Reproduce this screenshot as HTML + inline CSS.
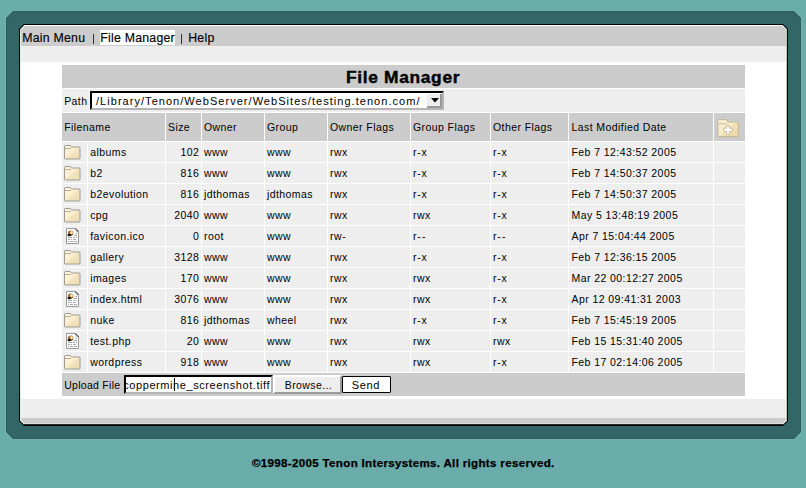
<!DOCTYPE html>
<html><head><meta charset="utf-8"><title>File Manager</title>
<style>
html,body{margin:0;padding:0;}
body{width:806px;height:488px;background:#6aacaa;position:relative;overflow:hidden;font-family:"Liberation Sans", sans-serif;}
.b{position:absolute;}
.t{position:absolute;white-space:pre;color:#000;}
</style></head><body>
<svg width="0" height="0" style="position:absolute"><defs>
<linearGradient id="fgrad" x1="0" y1="0" x2="1" y2="1"><stop offset="0" stop-color="#fdf5de"/><stop offset="0.5" stop-color="#faedcc"/><stop offset="0.53" stop-color="#f3e4bd"/><stop offset="1" stop-color="#ebdbb0"/></linearGradient>
<linearGradient id="fpgrad" x1="0" y1="0" x2="1" y2="1"><stop offset="0" stop-color="#fcf2d6"/><stop offset="0.5" stop-color="#f8eac4"/><stop offset="0.52" stop-color="#f2e2b8"/><stop offset="1" stop-color="#e8d5a5"/></linearGradient>
</defs></svg>
<div class="b" style="left:5px;top:10px;width:797px;height:430px;background:#70b3b0;clip-path:polygon(7.4px 0,calc(100% - 7.4px) 0,100% 7.4px,100% calc(100% - 7.4px),calc(100% - 7.4px) 100%,7.4px 100%,0 calc(100% - 7.4px),0 7.4px)"></div>
<div class="b" style="left:6px;top:11px;width:795px;height:428px;background:#2e5d5c;clip-path:polygon(7px 0,calc(100% - 7px) 0,100% 7px,100% calc(100% - 7px),calc(100% - 7px) 100%,7px 100%,0 calc(100% - 7px),0 7px)"></div>
<div class="b" style="left:7px;top:12px;width:793px;height:426px;background:#336666;clip-path:polygon(6.6px 0,calc(100% - 6.6px) 0,100% 6.6px,100% calc(100% - 6.6px),calc(100% - 6.6px) 100%,6.6px 100%,0 calc(100% - 6.6px),0 6.6px)"></div>
<div class="b" style="left:19px;top:24px;width:769px;height:402px;background:#000;clip-path:polygon(5px 0,calc(100% - 5px) 0,100% 5px,100% calc(100% - 5px),calc(100% - 5px) 100%,5px 100%,0 calc(100% - 5px),0 5px)"></div>
<div class="b" style="left:20px;top:25px;width:767px;height:400px;background:#fff;clip-path:polygon(4.4px 0,calc(100% - 4.4px) 0,100% 4.4px,100% calc(100% - 4.4px),calc(100% - 4.4px) 100%,4.4px 100%,0 calc(100% - 4.4px),0 4.4px)"></div>
<div class="b" style="left:21px;top:26px;width:765px;height:20px;background:#cccccc;clip-path:polygon(3.8px 0,calc(100% - 3.8px) 0,100% 3.8px,100% 100%,0 100%,0 3.8px)"></div>
<div class="b" style="left:21px;top:46px;width:765px;height:16px;background:#eeeeee;"></div>
<div class="b" style="left:21px;top:399px;width:765px;height:19px;background:#eeeeee;"></div>
<div class="b" style="left:21px;top:418px;width:765px;height:6px;background:#cccccc;clip-path:polygon(0 0,100% 0,100% calc(100% - 3.8px),calc(100% - 3.8px) 100%,3.8px 100%,0 calc(100% - 3.8px))"></div>
<div class="b" style="left:23px;top:423px;width:761px;height:1px;background:#dcdcdc;"></div>
<div class="b" style="left:24px;top:424px;width:759px;height:1px;background:#2a2a2a;"></div>
<div class="b" style="left:20px;top:30px;width:1px;height:390px;background:#e4f0e4;"></div>
<div class="b" style="left:786px;top:30px;width:1px;height:390px;background:#b4ccb4;"></div>
<div class="b" style="left:100px;top:30px;width:75px;height:15px;background:#fff;"></div>
<div class="t" style="top:31.59px;font-size:12.3px;line-height:12.3px;letter-spacing:0.25px;left:22.20px;-webkit-text-stroke:0.15px #000;">Main Menu</div>
<div class="b" style="left:93px;top:34px;width:1px;height:10px;background:#333;"></div>
<div class="t" style="top:31.59px;font-size:12.3px;line-height:12.3px;letter-spacing:0.25px;left:100.20px;-webkit-text-stroke:0.15px #000;">File Manager</div>
<div class="b" style="left:181px;top:34px;width:1px;height:10px;background:#333;"></div>
<div class="t" style="top:31.59px;font-size:12.3px;line-height:12.3px;letter-spacing:0.25px;left:188.20px;-webkit-text-stroke:0.15px #000;">Help</div>
<div class="b" style="left:62px;top:65px;width:683px;height:23px;background:#cccccc;"></div>
<div class="t" style="top:69.63px;font-size:15.8px;line-height:15.8px;letter-spacing:0.6px;font-weight:700;left:346.30px;transform:scaleX(1.1);transform-origin:0 0;-webkit-text-stroke:0.4px #000;">File Manager</div>
<div class="b" style="left:62px;top:89px;width:683px;height:23px;background:#eeeeee;"></div>
<div class="t" style="top:96.11px;font-size:10.5px;line-height:10.5px;letter-spacing:0.42px;left:64.20px;">Path</div>
<div class="b" style="left:89px;top:91px;width:1px;height:19px;background:#f8f8f8;"></div>
<div class="b" style="left:90px;top:91px;width:354px;height:19px;background:#fff;box-sizing:border-box;border-top:2px solid #000;border-left:2px solid #000;border-right:2px solid #b4b4b4;border-bottom:2px solid #b4b4b4"></div>
<div class="t" style="top:95.69px;font-size:11px;line-height:11px;letter-spacing:1.04px;left:96.00px;">/Library/Tenon/WebServer/WebSites/testing.tenon.com/</div>
<div class="b" style="left:427px;top:94px;width:15px;height:14px;background:#eeeeee;box-sizing:border-box;border-right:2px solid #9a9a9a;border-bottom:2px solid #9a9a9a"></div>
<svg width="9" height="5" viewBox="0 0 9 5" style="position:absolute;left:430.5px;top:98px"><path d="M0 0 H8 L4 4.5 Z" fill="#000"/></svg>
<div class="b" style="left:62px;top:113px;width:103px;height:28px;background:#cccccc;"></div>
<div class="b" style="left:166px;top:113px;width:35px;height:28px;background:#cccccc;"></div>
<div class="b" style="left:202px;top:113px;width:62px;height:28px;background:#cccccc;"></div>
<div class="b" style="left:265px;top:113px;width:62px;height:28px;background:#cccccc;"></div>
<div class="b" style="left:328px;top:113px;width:82px;height:28px;background:#cccccc;"></div>
<div class="b" style="left:411px;top:113px;width:79px;height:28px;background:#cccccc;"></div>
<div class="b" style="left:491px;top:113px;width:77px;height:28px;background:#cccccc;"></div>
<div class="b" style="left:569px;top:113px;width:144px;height:28px;background:#cccccc;"></div>
<div class="b" style="left:714px;top:113px;width:31px;height:28px;background:#cccccc;"></div>
<div class="t" style="top:122.11px;font-size:10.5px;line-height:10.5px;letter-spacing:0.42px;left:64.20px;">Filename</div>
<div class="t" style="top:122.11px;font-size:10.5px;line-height:10.5px;letter-spacing:0.42px;left:168.00px;">Size</div>
<div class="t" style="top:122.11px;font-size:10.5px;line-height:10.5px;letter-spacing:0.42px;left:204.00px;">Owner</div>
<div class="t" style="top:122.11px;font-size:10.5px;line-height:10.5px;letter-spacing:0.42px;left:267.00px;">Group</div>
<div class="t" style="top:122.11px;font-size:10.5px;line-height:10.5px;letter-spacing:0.42px;left:330.00px;">Owner Flags</div>
<div class="t" style="top:122.11px;font-size:10.5px;line-height:10.5px;letter-spacing:0.42px;left:413.00px;">Group Flags</div>
<div class="t" style="top:122.11px;font-size:10.5px;line-height:10.5px;letter-spacing:0.42px;left:493.00px;">Other Flags</div>
<div class="t" style="top:122.11px;font-size:10.5px;line-height:10.5px;letter-spacing:0.42px;left:571.50px;">Last Modified Date</div>
<svg width="22" height="19" viewBox="0 0 22 19" style="position:absolute;left:717px;top:118.5px">
<path d="M1 1.3 Q1 0.6 1.7 0.6 H9.3 L10.8 3 H20.6 Q21.3 3 21.3 3.7 V17 Q21.3 17.6 20.6 17.6 H1.7 Q1 17.6 1 17 Z" fill="url(#fpgrad)" stroke="#c4b898" stroke-width="1"/>
<path d="M1.5 4.8 H10" stroke="#c9bc98" stroke-width="1"/>
<path d="M9.5 6.7 H12.5 V9.2 H15.3 V12.4 H12.5 V15.3 H9.5 V12.4 H6.8 V9.2 H9.5 Z" fill="#fff" stroke="#cdbf9c" stroke-width="1"/>
</svg>
<div class="b" style="left:62px;top:142px;width:25px;height:20px;background:#eeeeee;"></div>
<div class="b" style="left:88px;top:142px;width:77px;height:20px;background:#eeeeee;"></div>
<div class="b" style="left:166px;top:142px;width:35px;height:20px;background:#eeeeee;"></div>
<div class="b" style="left:202px;top:142px;width:62px;height:20px;background:#eeeeee;"></div>
<div class="b" style="left:265px;top:142px;width:62px;height:20px;background:#eeeeee;"></div>
<div class="b" style="left:328px;top:142px;width:82px;height:20px;background:#eeeeee;"></div>
<div class="b" style="left:411px;top:142px;width:79px;height:20px;background:#eeeeee;"></div>
<div class="b" style="left:491px;top:142px;width:77px;height:20px;background:#eeeeee;"></div>
<div class="b" style="left:569px;top:142px;width:144px;height:20px;background:#eeeeee;"></div>
<div class="b" style="left:714px;top:142px;width:31px;height:20px;background:#eeeeee;"></div>
<svg width="17" height="15" viewBox="0 0 17 15" style="position:absolute;left:64px;top:144.5px">
<path d="M0.5 1.2 Q0.5 0.5 1.2 0.5 H6.3 L7.5 2 H15.3 Q16 2 16 2.7 V13.3 Q16 14 15.3 14 H1.2 Q0.5 14 0.5 13.3 Z" fill="url(#fgrad)" stroke="#9d9a93" stroke-width="1"/>
<path d="M1 3.5 H7" stroke="#b9b09a" stroke-width="1"/>
</svg>
<div class="t" style="top:146.81px;font-size:10.5px;line-height:10.5px;letter-spacing:0.42px;left:90.20px;">albums</div>
<div class="t" style="top:146.81px;font-size:10.5px;line-height:10.5px;letter-spacing:0.42px;right:606.70px;">102</div>
<div class="t" style="top:146.81px;font-size:10.5px;line-height:10.5px;letter-spacing:0.42px;left:204.00px;">www</div>
<div class="t" style="top:146.81px;font-size:10.5px;line-height:10.5px;letter-spacing:0.42px;left:267.00px;">www</div>
<div class="t" style="top:146.81px;font-size:10.5px;line-height:10.5px;letter-spacing:0.42px;left:330.00px;">rwx</div>
<div class="t" style="top:146.81px;font-size:10.5px;line-height:10.5px;letter-spacing:0.42px;left:413.00px;">r<span style="margin:0 0.35px">-</span>x</div>
<div class="t" style="top:146.81px;font-size:10.5px;line-height:10.5px;letter-spacing:0.42px;left:493.00px;">r<span style="margin:0 0.35px">-</span>x</div>
<div class="t" style="top:146.81px;font-size:10.5px;line-height:10.5px;letter-spacing:0.42px;left:571.50px;">Feb 7 12:43:52 2005</div>
<div class="b" style="left:62px;top:163px;width:25px;height:20px;background:#eeeeee;"></div>
<div class="b" style="left:88px;top:163px;width:77px;height:20px;background:#eeeeee;"></div>
<div class="b" style="left:166px;top:163px;width:35px;height:20px;background:#eeeeee;"></div>
<div class="b" style="left:202px;top:163px;width:62px;height:20px;background:#eeeeee;"></div>
<div class="b" style="left:265px;top:163px;width:62px;height:20px;background:#eeeeee;"></div>
<div class="b" style="left:328px;top:163px;width:82px;height:20px;background:#eeeeee;"></div>
<div class="b" style="left:411px;top:163px;width:79px;height:20px;background:#eeeeee;"></div>
<div class="b" style="left:491px;top:163px;width:77px;height:20px;background:#eeeeee;"></div>
<div class="b" style="left:569px;top:163px;width:144px;height:20px;background:#eeeeee;"></div>
<div class="b" style="left:714px;top:163px;width:31px;height:20px;background:#eeeeee;"></div>
<svg width="17" height="15" viewBox="0 0 17 15" style="position:absolute;left:64px;top:165.5px">
<path d="M0.5 1.2 Q0.5 0.5 1.2 0.5 H6.3 L7.5 2 H15.3 Q16 2 16 2.7 V13.3 Q16 14 15.3 14 H1.2 Q0.5 14 0.5 13.3 Z" fill="url(#fgrad)" stroke="#9d9a93" stroke-width="1"/>
<path d="M1 3.5 H7" stroke="#b9b09a" stroke-width="1"/>
</svg>
<div class="t" style="top:167.81px;font-size:10.5px;line-height:10.5px;letter-spacing:0.42px;left:90.20px;">b2</div>
<div class="t" style="top:167.81px;font-size:10.5px;line-height:10.5px;letter-spacing:0.42px;right:606.70px;">816</div>
<div class="t" style="top:167.81px;font-size:10.5px;line-height:10.5px;letter-spacing:0.42px;left:204.00px;">www</div>
<div class="t" style="top:167.81px;font-size:10.5px;line-height:10.5px;letter-spacing:0.42px;left:267.00px;">www</div>
<div class="t" style="top:167.81px;font-size:10.5px;line-height:10.5px;letter-spacing:0.42px;left:330.00px;">rwx</div>
<div class="t" style="top:167.81px;font-size:10.5px;line-height:10.5px;letter-spacing:0.42px;left:413.00px;">r<span style="margin:0 0.35px">-</span>x</div>
<div class="t" style="top:167.81px;font-size:10.5px;line-height:10.5px;letter-spacing:0.42px;left:493.00px;">r<span style="margin:0 0.35px">-</span>x</div>
<div class="t" style="top:167.81px;font-size:10.5px;line-height:10.5px;letter-spacing:0.42px;left:571.50px;">Feb 7 14:50:37 2005</div>
<div class="b" style="left:62px;top:184px;width:25px;height:20px;background:#eeeeee;"></div>
<div class="b" style="left:88px;top:184px;width:77px;height:20px;background:#eeeeee;"></div>
<div class="b" style="left:166px;top:184px;width:35px;height:20px;background:#eeeeee;"></div>
<div class="b" style="left:202px;top:184px;width:62px;height:20px;background:#eeeeee;"></div>
<div class="b" style="left:265px;top:184px;width:62px;height:20px;background:#eeeeee;"></div>
<div class="b" style="left:328px;top:184px;width:82px;height:20px;background:#eeeeee;"></div>
<div class="b" style="left:411px;top:184px;width:79px;height:20px;background:#eeeeee;"></div>
<div class="b" style="left:491px;top:184px;width:77px;height:20px;background:#eeeeee;"></div>
<div class="b" style="left:569px;top:184px;width:144px;height:20px;background:#eeeeee;"></div>
<div class="b" style="left:714px;top:184px;width:31px;height:20px;background:#eeeeee;"></div>
<svg width="17" height="15" viewBox="0 0 17 15" style="position:absolute;left:64px;top:186.5px">
<path d="M0.5 1.2 Q0.5 0.5 1.2 0.5 H6.3 L7.5 2 H15.3 Q16 2 16 2.7 V13.3 Q16 14 15.3 14 H1.2 Q0.5 14 0.5 13.3 Z" fill="url(#fgrad)" stroke="#9d9a93" stroke-width="1"/>
<path d="M1 3.5 H7" stroke="#b9b09a" stroke-width="1"/>
</svg>
<div class="t" style="top:188.81px;font-size:10.5px;line-height:10.5px;letter-spacing:0.42px;left:90.20px;">b2evolution</div>
<div class="t" style="top:188.81px;font-size:10.5px;line-height:10.5px;letter-spacing:0.42px;right:606.70px;">816</div>
<div class="t" style="top:188.81px;font-size:10.5px;line-height:10.5px;letter-spacing:0.42px;left:204.00px;">jdthomas</div>
<div class="t" style="top:188.81px;font-size:10.5px;line-height:10.5px;letter-spacing:0.42px;left:267.00px;">jdthomas</div>
<div class="t" style="top:188.81px;font-size:10.5px;line-height:10.5px;letter-spacing:0.42px;left:330.00px;">rwx</div>
<div class="t" style="top:188.81px;font-size:10.5px;line-height:10.5px;letter-spacing:0.42px;left:413.00px;">r<span style="margin:0 0.35px">-</span>x</div>
<div class="t" style="top:188.81px;font-size:10.5px;line-height:10.5px;letter-spacing:0.42px;left:493.00px;">r<span style="margin:0 0.35px">-</span>x</div>
<div class="t" style="top:188.81px;font-size:10.5px;line-height:10.5px;letter-spacing:0.42px;left:571.50px;">Feb 7 14:50:37 2005</div>
<div class="b" style="left:62px;top:205px;width:25px;height:20px;background:#eeeeee;"></div>
<div class="b" style="left:88px;top:205px;width:77px;height:20px;background:#eeeeee;"></div>
<div class="b" style="left:166px;top:205px;width:35px;height:20px;background:#eeeeee;"></div>
<div class="b" style="left:202px;top:205px;width:62px;height:20px;background:#eeeeee;"></div>
<div class="b" style="left:265px;top:205px;width:62px;height:20px;background:#eeeeee;"></div>
<div class="b" style="left:328px;top:205px;width:82px;height:20px;background:#eeeeee;"></div>
<div class="b" style="left:411px;top:205px;width:79px;height:20px;background:#eeeeee;"></div>
<div class="b" style="left:491px;top:205px;width:77px;height:20px;background:#eeeeee;"></div>
<div class="b" style="left:569px;top:205px;width:144px;height:20px;background:#eeeeee;"></div>
<div class="b" style="left:714px;top:205px;width:31px;height:20px;background:#eeeeee;"></div>
<svg width="17" height="15" viewBox="0 0 17 15" style="position:absolute;left:64px;top:207.5px">
<path d="M0.5 1.2 Q0.5 0.5 1.2 0.5 H6.3 L7.5 2 H15.3 Q16 2 16 2.7 V13.3 Q16 14 15.3 14 H1.2 Q0.5 14 0.5 13.3 Z" fill="url(#fgrad)" stroke="#9d9a93" stroke-width="1"/>
<path d="M1 3.5 H7" stroke="#b9b09a" stroke-width="1"/>
</svg>
<div class="t" style="top:209.81px;font-size:10.5px;line-height:10.5px;letter-spacing:0.42px;left:90.20px;">cpg</div>
<div class="t" style="top:209.81px;font-size:10.5px;line-height:10.5px;letter-spacing:0.42px;right:606.70px;">2040</div>
<div class="t" style="top:209.81px;font-size:10.5px;line-height:10.5px;letter-spacing:0.42px;left:204.00px;">www</div>
<div class="t" style="top:209.81px;font-size:10.5px;line-height:10.5px;letter-spacing:0.42px;left:267.00px;">www</div>
<div class="t" style="top:209.81px;font-size:10.5px;line-height:10.5px;letter-spacing:0.42px;left:330.00px;">rwx</div>
<div class="t" style="top:209.81px;font-size:10.5px;line-height:10.5px;letter-spacing:0.42px;left:413.00px;">rwx</div>
<div class="t" style="top:209.81px;font-size:10.5px;line-height:10.5px;letter-spacing:0.42px;left:493.00px;">r<span style="margin:0 0.35px">-</span>x</div>
<div class="t" style="top:209.81px;font-size:10.5px;line-height:10.5px;letter-spacing:0.42px;left:571.50px;">May 5 13:48:19 2005</div>
<div class="b" style="left:62px;top:226px;width:25px;height:20px;background:#eeeeee;"></div>
<div class="b" style="left:88px;top:226px;width:77px;height:20px;background:#eeeeee;"></div>
<div class="b" style="left:166px;top:226px;width:35px;height:20px;background:#eeeeee;"></div>
<div class="b" style="left:202px;top:226px;width:62px;height:20px;background:#eeeeee;"></div>
<div class="b" style="left:265px;top:226px;width:62px;height:20px;background:#eeeeee;"></div>
<div class="b" style="left:328px;top:226px;width:82px;height:20px;background:#eeeeee;"></div>
<div class="b" style="left:411px;top:226px;width:79px;height:20px;background:#eeeeee;"></div>
<div class="b" style="left:491px;top:226px;width:77px;height:20px;background:#eeeeee;"></div>
<div class="b" style="left:569px;top:226px;width:144px;height:20px;background:#eeeeee;"></div>
<div class="b" style="left:714px;top:226px;width:31px;height:20px;background:#eeeeee;"></div>
<svg width="14" height="17" viewBox="0 0 14 17" style="position:absolute;left:66px;top:228px">
<path d="M0.5 0.5 H9.2 L12.5 3.8 V15.5 H0.5 Z" fill="#fff" stroke="#9a9a9a" stroke-width="1"/>
<path d="M9.2 0.6 L12.5 3.9" stroke="#505050" stroke-width="1.3"/>
<path d="M10 2.5 V4 H11.5" stroke="#d0d0d0" stroke-width="0.8" fill="none"/>
<circle cx="4.6" cy="5.2" r="2.7" fill="#9a651f"/>
<circle cx="5.3" cy="4.7" r="1.6" fill="#e2b878"/>
<circle cx="5.6" cy="4.5" r="0.9" fill="#fbf6ee"/>
<ellipse cx="3.3" cy="7.2" rx="1.9" ry="1.1" fill="#0c0c0c"/>
<path d="M9.5 5.5 H11 M8 7.5 H11 M2 9.5 H6 M7 9.5 H9 M10 9.5 H11 M2 11.5 H4 M5 11.5 H6 M7 11.5 H10 M2 13.5 H3 M4 13.5 H7 M8 13.5 H11" stroke="#a8a8a8" stroke-width="1"/>
</svg>
<div class="t" style="top:230.81px;font-size:10.5px;line-height:10.5px;letter-spacing:0.42px;left:90.20px;">favicon.ico</div>
<div class="t" style="top:230.81px;font-size:10.5px;line-height:10.5px;letter-spacing:0.42px;right:606.70px;">0</div>
<div class="t" style="top:230.81px;font-size:10.5px;line-height:10.5px;letter-spacing:0.42px;left:204.00px;">root</div>
<div class="t" style="top:230.81px;font-size:10.5px;line-height:10.5px;letter-spacing:0.42px;left:267.00px;">www</div>
<div class="t" style="top:230.81px;font-size:10.5px;line-height:10.5px;letter-spacing:0.42px;left:330.00px;">rw<span style="margin:0 0.35px">-</span></div>
<div class="t" style="top:230.81px;font-size:10.5px;line-height:10.5px;letter-spacing:0.42px;left:413.00px;">r<span style="margin:0 0.35px">-</span><span style="margin:0 0.35px">-</span></div>
<div class="t" style="top:230.81px;font-size:10.5px;line-height:10.5px;letter-spacing:0.42px;left:493.00px;">r<span style="margin:0 0.35px">-</span><span style="margin:0 0.35px">-</span></div>
<div class="t" style="top:230.81px;font-size:10.5px;line-height:10.5px;letter-spacing:0.42px;left:571.50px;">Apr 7 15:04:44 2005</div>
<div class="b" style="left:62px;top:247px;width:25px;height:20px;background:#eeeeee;"></div>
<div class="b" style="left:88px;top:247px;width:77px;height:20px;background:#eeeeee;"></div>
<div class="b" style="left:166px;top:247px;width:35px;height:20px;background:#eeeeee;"></div>
<div class="b" style="left:202px;top:247px;width:62px;height:20px;background:#eeeeee;"></div>
<div class="b" style="left:265px;top:247px;width:62px;height:20px;background:#eeeeee;"></div>
<div class="b" style="left:328px;top:247px;width:82px;height:20px;background:#eeeeee;"></div>
<div class="b" style="left:411px;top:247px;width:79px;height:20px;background:#eeeeee;"></div>
<div class="b" style="left:491px;top:247px;width:77px;height:20px;background:#eeeeee;"></div>
<div class="b" style="left:569px;top:247px;width:144px;height:20px;background:#eeeeee;"></div>
<div class="b" style="left:714px;top:247px;width:31px;height:20px;background:#eeeeee;"></div>
<svg width="17" height="15" viewBox="0 0 17 15" style="position:absolute;left:64px;top:249.5px">
<path d="M0.5 1.2 Q0.5 0.5 1.2 0.5 H6.3 L7.5 2 H15.3 Q16 2 16 2.7 V13.3 Q16 14 15.3 14 H1.2 Q0.5 14 0.5 13.3 Z" fill="url(#fgrad)" stroke="#9d9a93" stroke-width="1"/>
<path d="M1 3.5 H7" stroke="#b9b09a" stroke-width="1"/>
</svg>
<div class="t" style="top:251.81px;font-size:10.5px;line-height:10.5px;letter-spacing:0.42px;left:90.20px;">gallery</div>
<div class="t" style="top:251.81px;font-size:10.5px;line-height:10.5px;letter-spacing:0.42px;right:606.70px;">3128</div>
<div class="t" style="top:251.81px;font-size:10.5px;line-height:10.5px;letter-spacing:0.42px;left:204.00px;">www</div>
<div class="t" style="top:251.81px;font-size:10.5px;line-height:10.5px;letter-spacing:0.42px;left:267.00px;">www</div>
<div class="t" style="top:251.81px;font-size:10.5px;line-height:10.5px;letter-spacing:0.42px;left:330.00px;">rwx</div>
<div class="t" style="top:251.81px;font-size:10.5px;line-height:10.5px;letter-spacing:0.42px;left:413.00px;">r<span style="margin:0 0.35px">-</span>x</div>
<div class="t" style="top:251.81px;font-size:10.5px;line-height:10.5px;letter-spacing:0.42px;left:493.00px;">r<span style="margin:0 0.35px">-</span>x</div>
<div class="t" style="top:251.81px;font-size:10.5px;line-height:10.5px;letter-spacing:0.42px;left:571.50px;">Feb 7 12:36:15 2005</div>
<div class="b" style="left:62px;top:268px;width:25px;height:20px;background:#eeeeee;"></div>
<div class="b" style="left:88px;top:268px;width:77px;height:20px;background:#eeeeee;"></div>
<div class="b" style="left:166px;top:268px;width:35px;height:20px;background:#eeeeee;"></div>
<div class="b" style="left:202px;top:268px;width:62px;height:20px;background:#eeeeee;"></div>
<div class="b" style="left:265px;top:268px;width:62px;height:20px;background:#eeeeee;"></div>
<div class="b" style="left:328px;top:268px;width:82px;height:20px;background:#eeeeee;"></div>
<div class="b" style="left:411px;top:268px;width:79px;height:20px;background:#eeeeee;"></div>
<div class="b" style="left:491px;top:268px;width:77px;height:20px;background:#eeeeee;"></div>
<div class="b" style="left:569px;top:268px;width:144px;height:20px;background:#eeeeee;"></div>
<div class="b" style="left:714px;top:268px;width:31px;height:20px;background:#eeeeee;"></div>
<svg width="17" height="15" viewBox="0 0 17 15" style="position:absolute;left:64px;top:270.5px">
<path d="M0.5 1.2 Q0.5 0.5 1.2 0.5 H6.3 L7.5 2 H15.3 Q16 2 16 2.7 V13.3 Q16 14 15.3 14 H1.2 Q0.5 14 0.5 13.3 Z" fill="url(#fgrad)" stroke="#9d9a93" stroke-width="1"/>
<path d="M1 3.5 H7" stroke="#b9b09a" stroke-width="1"/>
</svg>
<div class="t" style="top:272.81px;font-size:10.5px;line-height:10.5px;letter-spacing:0.42px;left:90.20px;">images</div>
<div class="t" style="top:272.81px;font-size:10.5px;line-height:10.5px;letter-spacing:0.42px;right:606.70px;">170</div>
<div class="t" style="top:272.81px;font-size:10.5px;line-height:10.5px;letter-spacing:0.42px;left:204.00px;">www</div>
<div class="t" style="top:272.81px;font-size:10.5px;line-height:10.5px;letter-spacing:0.42px;left:267.00px;">www</div>
<div class="t" style="top:272.81px;font-size:10.5px;line-height:10.5px;letter-spacing:0.42px;left:330.00px;">rwx</div>
<div class="t" style="top:272.81px;font-size:10.5px;line-height:10.5px;letter-spacing:0.42px;left:413.00px;">rwx</div>
<div class="t" style="top:272.81px;font-size:10.5px;line-height:10.5px;letter-spacing:0.42px;left:493.00px;">r<span style="margin:0 0.35px">-</span>x</div>
<div class="t" style="top:272.81px;font-size:10.5px;line-height:10.5px;letter-spacing:0.42px;left:571.50px;">Mar 22 00:12:27 2005</div>
<div class="b" style="left:62px;top:289px;width:25px;height:20px;background:#eeeeee;"></div>
<div class="b" style="left:88px;top:289px;width:77px;height:20px;background:#eeeeee;"></div>
<div class="b" style="left:166px;top:289px;width:35px;height:20px;background:#eeeeee;"></div>
<div class="b" style="left:202px;top:289px;width:62px;height:20px;background:#eeeeee;"></div>
<div class="b" style="left:265px;top:289px;width:62px;height:20px;background:#eeeeee;"></div>
<div class="b" style="left:328px;top:289px;width:82px;height:20px;background:#eeeeee;"></div>
<div class="b" style="left:411px;top:289px;width:79px;height:20px;background:#eeeeee;"></div>
<div class="b" style="left:491px;top:289px;width:77px;height:20px;background:#eeeeee;"></div>
<div class="b" style="left:569px;top:289px;width:144px;height:20px;background:#eeeeee;"></div>
<div class="b" style="left:714px;top:289px;width:31px;height:20px;background:#eeeeee;"></div>
<svg width="14" height="17" viewBox="0 0 14 17" style="position:absolute;left:66px;top:291px">
<path d="M0.5 0.5 H9.2 L12.5 3.8 V15.5 H0.5 Z" fill="#fff" stroke="#9a9a9a" stroke-width="1"/>
<path d="M9.2 0.6 L12.5 3.9" stroke="#505050" stroke-width="1.3"/>
<path d="M10 2.5 V4 H11.5" stroke="#d0d0d0" stroke-width="0.8" fill="none"/>
<circle cx="4.6" cy="5.2" r="2.7" fill="#9a651f"/>
<circle cx="5.3" cy="4.7" r="1.6" fill="#e2b878"/>
<circle cx="5.6" cy="4.5" r="0.9" fill="#fbf6ee"/>
<ellipse cx="3.3" cy="7.2" rx="1.9" ry="1.1" fill="#0c0c0c"/>
<path d="M9.5 5.5 H11 M8 7.5 H11 M2 9.5 H6 M7 9.5 H9 M10 9.5 H11 M2 11.5 H4 M5 11.5 H6 M7 11.5 H10 M2 13.5 H3 M4 13.5 H7 M8 13.5 H11" stroke="#a8a8a8" stroke-width="1"/>
</svg>
<div class="t" style="top:293.81px;font-size:10.5px;line-height:10.5px;letter-spacing:0.42px;left:90.20px;">index.html</div>
<div class="t" style="top:293.81px;font-size:10.5px;line-height:10.5px;letter-spacing:0.42px;right:606.70px;">3076</div>
<div class="t" style="top:293.81px;font-size:10.5px;line-height:10.5px;letter-spacing:0.42px;left:204.00px;">www</div>
<div class="t" style="top:293.81px;font-size:10.5px;line-height:10.5px;letter-spacing:0.42px;left:267.00px;">www</div>
<div class="t" style="top:293.81px;font-size:10.5px;line-height:10.5px;letter-spacing:0.42px;left:330.00px;">rwx</div>
<div class="t" style="top:293.81px;font-size:10.5px;line-height:10.5px;letter-spacing:0.42px;left:413.00px;">rwx</div>
<div class="t" style="top:293.81px;font-size:10.5px;line-height:10.5px;letter-spacing:0.42px;left:493.00px;">r<span style="margin:0 0.35px">-</span>x</div>
<div class="t" style="top:293.81px;font-size:10.5px;line-height:10.5px;letter-spacing:0.42px;left:571.50px;">Apr 12 09:41:31 2003</div>
<div class="b" style="left:62px;top:310px;width:25px;height:20px;background:#eeeeee;"></div>
<div class="b" style="left:88px;top:310px;width:77px;height:20px;background:#eeeeee;"></div>
<div class="b" style="left:166px;top:310px;width:35px;height:20px;background:#eeeeee;"></div>
<div class="b" style="left:202px;top:310px;width:62px;height:20px;background:#eeeeee;"></div>
<div class="b" style="left:265px;top:310px;width:62px;height:20px;background:#eeeeee;"></div>
<div class="b" style="left:328px;top:310px;width:82px;height:20px;background:#eeeeee;"></div>
<div class="b" style="left:411px;top:310px;width:79px;height:20px;background:#eeeeee;"></div>
<div class="b" style="left:491px;top:310px;width:77px;height:20px;background:#eeeeee;"></div>
<div class="b" style="left:569px;top:310px;width:144px;height:20px;background:#eeeeee;"></div>
<div class="b" style="left:714px;top:310px;width:31px;height:20px;background:#eeeeee;"></div>
<svg width="17" height="15" viewBox="0 0 17 15" style="position:absolute;left:64px;top:312.5px">
<path d="M0.5 1.2 Q0.5 0.5 1.2 0.5 H6.3 L7.5 2 H15.3 Q16 2 16 2.7 V13.3 Q16 14 15.3 14 H1.2 Q0.5 14 0.5 13.3 Z" fill="url(#fgrad)" stroke="#9d9a93" stroke-width="1"/>
<path d="M1 3.5 H7" stroke="#b9b09a" stroke-width="1"/>
</svg>
<div class="t" style="top:314.81px;font-size:10.5px;line-height:10.5px;letter-spacing:0.42px;left:90.20px;">nuke</div>
<div class="t" style="top:314.81px;font-size:10.5px;line-height:10.5px;letter-spacing:0.42px;right:606.70px;">816</div>
<div class="t" style="top:314.81px;font-size:10.5px;line-height:10.5px;letter-spacing:0.42px;left:204.00px;">jdthomas</div>
<div class="t" style="top:314.81px;font-size:10.5px;line-height:10.5px;letter-spacing:0.42px;left:267.00px;">wheel</div>
<div class="t" style="top:314.81px;font-size:10.5px;line-height:10.5px;letter-spacing:0.42px;left:330.00px;">rwx</div>
<div class="t" style="top:314.81px;font-size:10.5px;line-height:10.5px;letter-spacing:0.42px;left:413.00px;">r<span style="margin:0 0.35px">-</span>x</div>
<div class="t" style="top:314.81px;font-size:10.5px;line-height:10.5px;letter-spacing:0.42px;left:493.00px;">r<span style="margin:0 0.35px">-</span>x</div>
<div class="t" style="top:314.81px;font-size:10.5px;line-height:10.5px;letter-spacing:0.42px;left:571.50px;">Feb 7 15:45:19 2005</div>
<div class="b" style="left:62px;top:331px;width:25px;height:20px;background:#eeeeee;"></div>
<div class="b" style="left:88px;top:331px;width:77px;height:20px;background:#eeeeee;"></div>
<div class="b" style="left:166px;top:331px;width:35px;height:20px;background:#eeeeee;"></div>
<div class="b" style="left:202px;top:331px;width:62px;height:20px;background:#eeeeee;"></div>
<div class="b" style="left:265px;top:331px;width:62px;height:20px;background:#eeeeee;"></div>
<div class="b" style="left:328px;top:331px;width:82px;height:20px;background:#eeeeee;"></div>
<div class="b" style="left:411px;top:331px;width:79px;height:20px;background:#eeeeee;"></div>
<div class="b" style="left:491px;top:331px;width:77px;height:20px;background:#eeeeee;"></div>
<div class="b" style="left:569px;top:331px;width:144px;height:20px;background:#eeeeee;"></div>
<div class="b" style="left:714px;top:331px;width:31px;height:20px;background:#eeeeee;"></div>
<svg width="14" height="17" viewBox="0 0 14 17" style="position:absolute;left:66px;top:333px">
<path d="M0.5 0.5 H9.2 L12.5 3.8 V15.5 H0.5 Z" fill="#fff" stroke="#9a9a9a" stroke-width="1"/>
<path d="M9.2 0.6 L12.5 3.9" stroke="#505050" stroke-width="1.3"/>
<path d="M10 2.5 V4 H11.5" stroke="#d0d0d0" stroke-width="0.8" fill="none"/>
<circle cx="4.6" cy="5.2" r="2.7" fill="#9a651f"/>
<circle cx="5.3" cy="4.7" r="1.6" fill="#e2b878"/>
<circle cx="5.6" cy="4.5" r="0.9" fill="#fbf6ee"/>
<ellipse cx="3.3" cy="7.2" rx="1.9" ry="1.1" fill="#0c0c0c"/>
<path d="M9.5 5.5 H11 M8 7.5 H11 M2 9.5 H6 M7 9.5 H9 M10 9.5 H11 M2 11.5 H4 M5 11.5 H6 M7 11.5 H10 M2 13.5 H3 M4 13.5 H7 M8 13.5 H11" stroke="#a8a8a8" stroke-width="1"/>
</svg>
<div class="t" style="top:335.81px;font-size:10.5px;line-height:10.5px;letter-spacing:0.42px;left:90.20px;">test.php</div>
<div class="t" style="top:335.81px;font-size:10.5px;line-height:10.5px;letter-spacing:0.42px;right:606.70px;">20</div>
<div class="t" style="top:335.81px;font-size:10.5px;line-height:10.5px;letter-spacing:0.42px;left:204.00px;">www</div>
<div class="t" style="top:335.81px;font-size:10.5px;line-height:10.5px;letter-spacing:0.42px;left:267.00px;">www</div>
<div class="t" style="top:335.81px;font-size:10.5px;line-height:10.5px;letter-spacing:0.42px;left:330.00px;">rwx</div>
<div class="t" style="top:335.81px;font-size:10.5px;line-height:10.5px;letter-spacing:0.42px;left:413.00px;">rwx</div>
<div class="t" style="top:335.81px;font-size:10.5px;line-height:10.5px;letter-spacing:0.42px;left:493.00px;">rwx</div>
<div class="t" style="top:335.81px;font-size:10.5px;line-height:10.5px;letter-spacing:0.42px;left:571.50px;">Feb 15 15:31:40 2005</div>
<div class="b" style="left:62px;top:352px;width:25px;height:20px;background:#eeeeee;"></div>
<div class="b" style="left:88px;top:352px;width:77px;height:20px;background:#eeeeee;"></div>
<div class="b" style="left:166px;top:352px;width:35px;height:20px;background:#eeeeee;"></div>
<div class="b" style="left:202px;top:352px;width:62px;height:20px;background:#eeeeee;"></div>
<div class="b" style="left:265px;top:352px;width:62px;height:20px;background:#eeeeee;"></div>
<div class="b" style="left:328px;top:352px;width:82px;height:20px;background:#eeeeee;"></div>
<div class="b" style="left:411px;top:352px;width:79px;height:20px;background:#eeeeee;"></div>
<div class="b" style="left:491px;top:352px;width:77px;height:20px;background:#eeeeee;"></div>
<div class="b" style="left:569px;top:352px;width:144px;height:20px;background:#eeeeee;"></div>
<div class="b" style="left:714px;top:352px;width:31px;height:20px;background:#eeeeee;"></div>
<svg width="17" height="15" viewBox="0 0 17 15" style="position:absolute;left:64px;top:354.5px">
<path d="M0.5 1.2 Q0.5 0.5 1.2 0.5 H6.3 L7.5 2 H15.3 Q16 2 16 2.7 V13.3 Q16 14 15.3 14 H1.2 Q0.5 14 0.5 13.3 Z" fill="url(#fgrad)" stroke="#9d9a93" stroke-width="1"/>
<path d="M1 3.5 H7" stroke="#b9b09a" stroke-width="1"/>
</svg>
<div class="t" style="top:356.81px;font-size:10.5px;line-height:10.5px;letter-spacing:0.42px;left:90.20px;">wordpress</div>
<div class="t" style="top:356.81px;font-size:10.5px;line-height:10.5px;letter-spacing:0.42px;right:606.70px;">918</div>
<div class="t" style="top:356.81px;font-size:10.5px;line-height:10.5px;letter-spacing:0.42px;left:204.00px;">www</div>
<div class="t" style="top:356.81px;font-size:10.5px;line-height:10.5px;letter-spacing:0.42px;left:267.00px;">www</div>
<div class="t" style="top:356.81px;font-size:10.5px;line-height:10.5px;letter-spacing:0.42px;left:330.00px;">rwx</div>
<div class="t" style="top:356.81px;font-size:10.5px;line-height:10.5px;letter-spacing:0.42px;left:413.00px;">rwx</div>
<div class="t" style="top:356.81px;font-size:10.5px;line-height:10.5px;letter-spacing:0.42px;left:493.00px;">r<span style="margin:0 0.35px">-</span>x</div>
<div class="t" style="top:356.81px;font-size:10.5px;line-height:10.5px;letter-spacing:0.42px;left:571.50px;">Feb 17 02:14:06 2005</div>
<div class="b" style="left:62px;top:373px;width:683px;height:23px;background:#cccccc;"></div>
<div class="t" style="top:380.11px;font-size:10.5px;line-height:10.5px;letter-spacing:0.28px;left:64.20px;">Upload File</div>
<div class="b" style="left:124px;top:375px;width:149px;height:19px;background:#fff;box-sizing:border-box;border-top:2px solid #000;border-left:2px solid #000;border-right:2px solid #b4b4b4;border-bottom:2px solid #b4b4b4;overflow:hidden"><div class="t" style="top:2.69px;font-size:11px;line-height:11px;letter-spacing:0.58px;left:-2.80px;">coppermine_screenshot.tiff</div></div>
<div class="b" style="left:174px;top:378px;width:1px;height:13px;background:#000;"></div>
<div class="b" style="left:273px;top:375px;width:69px;height:19px;background:#eeeeee;box-sizing:border-box;border-top:2px solid #fff;border-left:2px solid #fff;border-right:2px solid #9a9a9a;border-bottom:2px solid #9a9a9a"></div>
<div class="t" style="top:380.11px;font-size:10.5px;line-height:10.5px;letter-spacing:0.4px;left:284.80px;">Browse...</div>
<div class="b" style="left:342px;top:376px;width:49px;height:17px;background:#fff;box-sizing:border-box;border:1px solid #000;border-radius:1px"></div>
<div class="t" style="top:379.69px;font-size:11px;line-height:11px;letter-spacing:0.6px;left:351.80px;">Send</div>
<div class="t" style="top:458.11px;font-size:10.5px;line-height:10.5px;letter-spacing:0.3px;font-weight:700;left:252.00px;transform:scaleX(1.1);transform-origin:0 0;-webkit-text-stroke:0.25px #000;">©1998-2005 Tenon Intersystems. All rights reserved.</div>
</body></html>
